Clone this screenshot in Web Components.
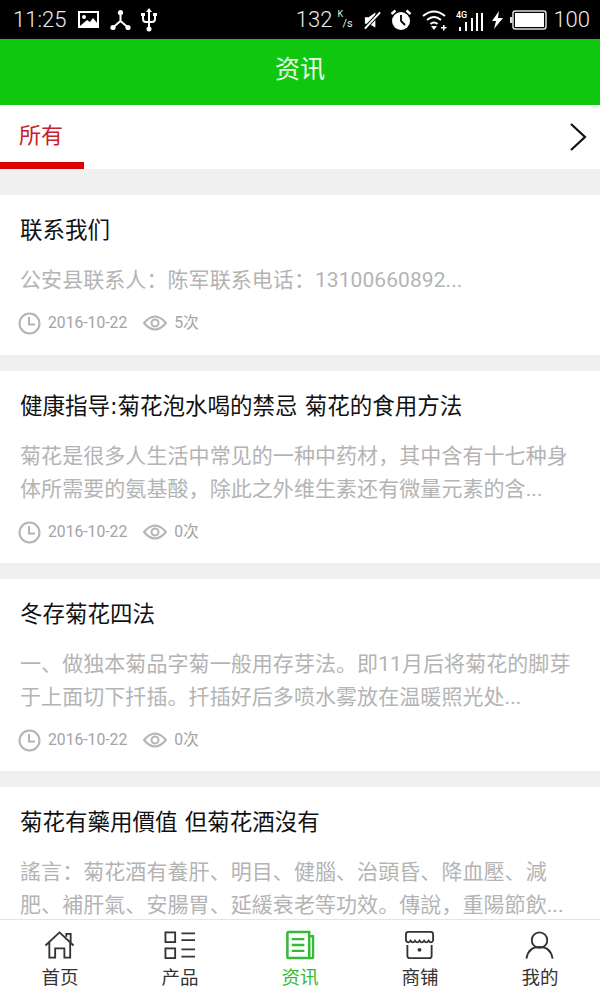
<!DOCTYPE html>
<html lang="zh">
<head>
<meta charset="utf-8">
<title>资讯</title>
<style>
  html, body { margin: 0; padding: 0; height: 100%; }
  body { width: 600px; height: 1000px; overflow: hidden; background: #f0f0f0;
    font-family: Roboto, "Noto Sans CJK SC", sans-serif; display: flex; flex-direction: column; }
</style>
</head>
<body>
<status-bar></status-bar>
<title-bar>资讯</title-bar>
<tab-strip>所有</tab-strip>
<news-list>
  <news-card date="2016-10-22" views="5次" heading="联系我们" style="--h:160px">公安县联系人&#xFF1A;陈军联系电话&#xFF1A;13100660892...</news-card>
  <news-card date="2016-10-22" views="0次" heading="健康指导:菊花泡水喝的禁忌 菊花的食用方法" style="--h:192px">菊花是很多人生活中常见的一种中药材&#xFF0C;其中含有十七种身体所需要的氨基酸&#xFF0C;除此之外维生素还有微量元素的含...</news-card>
  <news-card date="2016-10-22" views="0次" heading="冬存菊花四法" style="--h:192px">一、做独本菊品字菊一般用存芽法。即11月后将菊花的脚芽于上面切下扦插。扦插好后多喷水雾放在温暖照光处...</news-card>
  <news-card heading="菊花有藥用價值 但菊花酒沒有" style="--h:132px">謠言&#xFF1A;菊花酒有養肝、明目、健腦、治頭昏、降血壓、減肥、補肝氣、安腸胃、延緩衰老等功效。傳說&#xFF0C;重陽節飲...</news-card>
</news-list>
<bottom-nav>
  <nav-item label="首页" icon="home"></nav-item>
  <nav-item label="产品" icon="list"></nav-item>
  <nav-item label="资讯" icon="news" active></nav-item>
  <nav-item label="商铺" icon="shop"></nav-item>
  <nav-item label="我的" icon="user"></nav-item>
</bottom-nav>

<script>
// every element gets an open shadow root from this little helper
function shadow(el, html) {
  el.attachShadow({ mode: 'open' }).innerHTML = html;
}

class StatusBar extends HTMLElement {
  connectedCallback() {
    shadow(this, `
      <style>
        :host { display: flex; align-items: center; justify-content: space-between; height: 39px; flex: none;
          background: #000; color: #ececec; font: 300 22px Roboto, sans-serif; padding: 0 10px 0 13px; box-sizing: border-box; }
        .side { display: flex; align-items: center; }
        svg { display: block; }
        .speed { width: 15px; height: 18px; margin: 0 11px 0 5px; font-weight: 400; font-size: 9px; line-height: 9px; position: relative; top: -1px; }
        .speed i { font-style: normal; display: block; }
        .speed i + i { font-size: 11px; line-height: 10px; padding-left: 5px; }
      </style>
      <div class="side">
        <span>11:25</span>
        <svg style="margin-left:12px" width="22" height="18" viewBox="0 0 22 18"><path fill="#fff" fill-rule="evenodd" d="M0 0h21v17H0zM2 2v13h17V2z"/><circle cx="6" cy="6" r="2" fill="#fff"/><path fill="#fff" d="M2 15l7-6 3 2 3-4 5 6v2H2z"/></svg>
        <svg style="margin-left:10px" width="21" height="22" viewBox="0 0 21 22"><g stroke="#fff" stroke-width="2" fill="none"><path d="M10.500 3v9l-7 6M10.500 12l7 6"/></g><circle cx="10.500" cy="3.500" r="2.600" fill="#fff"/><circle cx="3" cy="18.500" r="2.600" fill="#fff"/><circle cx="18" cy="18.500" r="2.600" fill="#fff"/></svg>
        <svg style="margin-left:10px" width="16" height="24" viewBox="0 0 16 24"><g stroke="#fff" stroke-width="2" fill="none"><path d="M8 3v18M2 7v4q0 3 3 3h6q3 0 3-3V7"/></g><path fill="#fff" d="M8 0l3 4H5zM0 5h4v3H0zM12 5h4v3h-4z"/><circle cx="8" cy="21" r="2.500" fill="#fff"/></svg>
      </div>
      <div class="side">
        <span>132</span>
        <span class="speed"><i>K</i><i>/s</i></span>
        <svg width="19" height="20" viewBox="0 0 20 20"><path fill="#fff" d="M2 7h4l7-5v16l-7-4H2z"/><path stroke="#000" stroke-width="4" d="M2 19L18 2"/><path stroke="#fff" stroke-width="2" d="M2 19L18 2"/></svg>
        <svg style="margin-left:8px" width="22" height="22" viewBox="0 0 22 22"><circle cx="11" cy="12" r="9" fill="#fff"/><path stroke="#000" stroke-width="1.800" fill="none" d="M11 6v6l4 4"/><path stroke="#fff" stroke-width="2.400" d="M1.500 5l4-3.500M20.500 5l-4-3.500"/></svg>
        <svg style="margin-left:10px" width="26" height="22" viewBox="0 0 26 22"><g stroke="#fff" stroke-width="2" fill="none"><path d="M1 7q11-9 22 0M5 11q7-6 14 0M8.500 15q3.500-3 7 0"/></g><path fill="#fff" d="M9 17h6l-3 4zM21 16h1.500v2h2v1.500h-2v2H21v-2h-2V18h2z"/></svg>
        <svg style="margin-left:8px" width="27" height="24" viewBox="0 0 27 24"><path fill="#fff" d="M3 19h2v4H3zM9 14h2v9H9zM15 10h2v13h-2zM20 5h2v18h-2zM25 5h2v18h-2z"/><text x="0" y="10" font-size="9" font-family="Roboto, sans-serif" font-weight="500" fill="#fff">4G</text></svg>
        <svg style="margin-left:9px" width="11" height="18" viewBox="0 0 11 18"><path fill="#fff" d="M7 0L0 10h4l-2 8 9-11H6z"/></svg>
        <svg style="margin-left:7px" width="37" height="20" viewBox="0 0 37 20"><rect x="3" y="1" width="33" height="18" rx="2.500" fill="none" stroke="#ddd" stroke-width="1.500"/><rect x="5" y="3" width="29" height="14" fill="#fff"/><rect x="0" y="7" width="2.500" height="6" fill="#ddd"/></svg>
        <span style="margin-left:6px">100</span>
      </div>`);
  }
}

class TitleBar extends HTMLElement {
  connectedCallback() {
    shadow(this, `
      <style>
        :host { display: flex; align-items: center; justify-content: center; height: 66px; flex: none; box-sizing: border-box;
          padding-bottom: 10px; background: #10c70f; color: #e9fbe9; font: 25px "Noto Sans CJK SC", sans-serif; }
      </style>
      <slot></slot>`);
  }
}

class TabStrip extends HTMLElement {
  connectedCallback() {
    shadow(this, `
      <style>
        :host { display: flex; align-items: stretch; justify-content: space-between; height: 64px; flex: none;
          background: #fff; font: 22px "Noto Sans CJK SC", sans-serif; }
        .tab { width: 84px; box-sizing: border-box; color: #c8202a; border-bottom: 7px solid #dc0000;
          padding: 0 0 2px 19px; display: flex; align-items: center; }
        svg { align-self: center; margin-right: 13px; }
      </style>
      <div class="tab"><slot></slot></div>
      <svg width="18" height="30" viewBox="0 0 18 30"><path d="M2 2l14 13L2 28" fill="none" stroke="#111" stroke-width="2.200"/></svg>`);
  }
}

class NewsList extends HTMLElement {
  connectedCallback() {
    shadow(this, `
      <style>
        :host { display: flex; flex-direction: column; gap: 16px; flex: 1; min-height: 0; overflow: hidden;
          padding-top: 26px; box-sizing: border-box; }
      </style>
      <slot></slot>`);
  }
}

class NewsCard extends HTMLElement {
  connectedCallback() {
    const date = this.getAttribute('date');
    const meta = !date ? '' : `
      <div class="meta">
        <svg width="23" height="23" viewBox="0 0 23 23"><circle cx="11.500" cy="11.500" r="10" fill="none" stroke="#b4b4b4" stroke-width="2"/><path d="M11 5v7.500h6" fill="none" stroke="#b4b4b4" stroke-width="2"/></svg>
        <span>${date}</span>
        <svg width="24" height="16" viewBox="0 0 24 16"><path d="M1 8q11-13 22 0q-11 13-22 0z" fill="none" stroke="#b4b4b4" stroke-width="2"/><circle cx="12" cy="8" r="3.500" fill="none" stroke="#b4b4b4" stroke-width="2"/></svg>
        <span>${this.getAttribute('views')}</span>
      </div>`;
    shadow(this, `
      <style>
        :host { display: flex; flex-direction: column; flex: none; height: var(--h); box-sizing: border-box;
          background: #fff; padding: 17px 20px 0; }
        h3 { margin: 0; font: 400 22.500px/36px "DejaVu Sans", "Noto Sans CJK SC", sans-serif; color: #111; white-space: nowrap; }
        p { margin: 16px 0 0; font: 21px/33px Roboto, "Noto Sans CJK SC", sans-serif; letter-spacing: 0.07px; color: #b4b4b4; }
        .meta { display: flex; align-items: center; margin: 14px 0 0 -2px; color: #a4a4a4; font: 15.700px/24px Roboto, "Noto Sans CJK SC", sans-serif; }
        .meta span { margin-left: 7px; }
        .meta span + svg { margin-left: 16px; }
      </style>
      <h3>${this.getAttribute('heading')}</h3>
      <p><slot></slot></p>${meta}`);
  }
}

class BottomNav extends HTMLElement {
  connectedCallback() {
    shadow(this, `
      <style>
        :host { display: flex; justify-content: space-around; height: 81px; flex: none; box-sizing: border-box;
          background: #fff; border-top: 1px solid #e4e4e4; position: relative; z-index: 1; }
      </style>
      <slot></slot>`);
  }
}

const NAV_ICONS = {
  home: '<path d="M1.500 15.500L16 2 30.500 15.500M5.500 12.500V28h6V18.500h9.500V28h6V12.500M23 6.500V3.500h4.500v9"/>',
  list: '<rect x="1.500" y="2" width="10" height="10"/><rect x="1.500" y="18.500" width="10" height="10"/><path d="M18 3h14M18 10h14M18 19.500h14M18 27h14"/>',
  news: '<path d="M3.500 3q0-1.500 1.500-1.500h21V28.500H5q-1.500 0-1.500-1.500z" stroke-width="2.600"/><path d="M26 6h4v21q0 1.500-1.500 1.500H26" stroke-width="2.400"/><path d="M8 9h13M8 15h13M8 21h13" stroke-width="2.400"/>',
  shop: '<path d="M2 11V4q0-2.500 2.500-2.500h23Q30 1.500 30 4v7M2 10.500q2.400 3.500 4.700 0 2.400 3.500 4.700 0 2.300 3.500 4.600 0 2.400 3.500 4.700 0 2.300 3.500 4.600 0 2.400 3.500 4.700 0M3.500 15v11q0 2.500 2.500 2.500h20q2.500 0 2.500-2.500V15"/><circle cx="16" cy="20" r="2" fill="currentColor" stroke="none"/>',
  user: '<circle cx="16" cy="10" r="8"/><path d="M2.500 29q2-12 13.500-12t13.500 12"/>'
};

class NavItem extends HTMLElement {
  connectedCallback() {
    const on = this.hasAttribute('active');
    shadow(this, `
      <style>
        :host { display: flex; flex-direction: column; align-items: center; width: 120px; padding-top: 10px; box-sizing: border-box;
          color: ${on ? '#33bb33' : '#333'}; font: 18.500px/24px "Noto Sans CJK SC", sans-serif; }
        svg { display: block; margin-bottom: 4px; }
      </style>
      <svg width="32" height="30" viewBox="0 0 33 30" fill="none" stroke="currentColor" stroke-width="1.900">${NAV_ICONS[this.getAttribute('icon')]}</svg>
      <span>${this.getAttribute('label')}</span>`);
  }
}

customElements.define('status-bar', StatusBar);
customElements.define('title-bar', TitleBar);
customElements.define('tab-strip', TabStrip);
customElements.define('news-list', NewsList);
customElements.define('news-card', NewsCard);
customElements.define('bottom-nav', BottomNav);
customElements.define('nav-item', NavItem);
</script>
</body>
</html>
